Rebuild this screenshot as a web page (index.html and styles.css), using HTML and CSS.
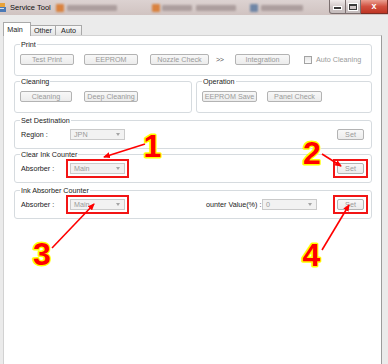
FILE: index.html
```html
<!DOCTYPE html>
<html lang="en">
<head>
<meta charset="utf-8">
<title>Service Tool</title>
<link rel="stylesheet" href="styles.css">
</head>
<body>
<div class="window">
  <header class="titlebar">
    <svg class="appicon" width="8" height="10" viewBox="0 0 8 10">
      <rect x="0" y="0" width="6" height="4" fill="#e8a23a"/>
      <rect x="0" y="4" width="7" height="5" fill="#4b79b6"/>
      <rect x="1" y="5" width="4" height="1" fill="#cfe0f2"/>
    </svg>
    <span class="title">Service Tool</span>
    <span class="blur sq orange m1"></span>
    <span class="blur txt w50 m2"></span>
    <span class="blur sq orange m3"></span>
    <span class="blur txt w30 m4"></span>
    <span class="blur txt w40 m5"></span>
    <span class="blur sq blue m6"></span>
    <span class="blur txt w42 m7"></span>
    <div class="controls">
      <span class="ctl min"><i></i></span>
      <span class="ctl max"><i></i></span>
      <span class="ctl close">x</span>
    </div>
  </header>

  <div class="frame">
    <nav class="tabs">
      <span class="tab active">Main</span>
      <span class="tab other">Other</span>
      <span class="tab auto">Auto</span>
    </nav>
    <main class="panel">
      <fieldset class="group print">
        <legend>Print</legend>
        <div class="row">
          <span class="btn w54">Test Print</span>
          <span class="btn w54 ml10">EEPROM</span>
          <span class="btn w59 ml12">Nozzle Check</span>
          <span class="next">&gt;&gt;</span>
          <span class="btn w55 ml10">Integration</span>
          <span class="check"><span class="box"></span>Auto Cleaning</span>
        </div>
      </fieldset>

      <div class="pair">
        <fieldset class="group cleaning">
          <legend>Cleaning</legend>
          <div class="row">
            <span class="btn w52">Cleaning</span>
            <span class="btn w54 ml12">Deep Cleaning</span>
          </div>
        </fieldset>
        <fieldset class="group operation">
          <legend>Operation</legend>
          <div class="row">
            <span class="btn w55">EEPROM Save</span>
            <span class="btn w55 ml10">Panel Check</span>
          </div>
        </fieldset>
      </div>

      <fieldset class="group compact dest">
        <legend>Set Destination</legend>
        <div class="row">
          <span class="lbl">Region :</span>
          <span class="select">JPN<span class="caret"></span></span>
          <span class="btn set">Set</span>
        </div>
      </fieldset>

      <fieldset class="group compact clear">
        <legend>Clear Ink Counter</legend>
        <div class="row">
          <span class="lbl">Absorber :</span>
          <span class="hlbox"><span class="select">Main<span class="caret"></span></span></span>
          <span class="hlbox push"><span class="btn w27">Set</span></span>
        </div>
      </fieldset>

      <fieldset class="group compact absorb">
        <legend>Ink Absorber Counter</legend>
        <div class="row">
          <span class="lbl">Absorber :</span>
          <span class="hlbox"><span class="select">Main<span class="caret"></span></span></span>
          <span class="vlbl">ounter Value(%) :</span>
          <span class="select">0<span class="caret"></span></span>
          <span class="hlbox push"><span class="btn w27">Set</span></span>
        </div>
      </fieldset>
    </main>
  </div>
</div>

<svg class="overlay" width="388" height="364" viewBox="0 0 388 364">
  <defs>
    <marker id="ah" markerWidth="7" markerHeight="6" refX="6" refY="3" orient="auto" markerUnits="userSpaceOnUse">
      <path d="M0,0 L7,3 L0,6 z" fill="#ff0000"/>
    </marker>
  </defs>
  <g class="arrows" stroke="#ff0000" stroke-width="1.6" marker-end="url(#ah)">
    <line x1="145" y1="144" x2="104" y2="157"/>
    <line x1="322" y1="154" x2="341" y2="166"/>
    <line x1="52" y1="248" x2="94" y2="204"/>
    <line x1="322" y1="250" x2="349" y2="205"/>
  </g>
  <g class="nums">
    <text x="152.5" y="157">1</text>
    <text x="312" y="164">2</text>
    <text x="42" y="265">3</text>
    <text x="311.5" y="266">4</text>
  </g>
</svg>
</body>
</html>
```
FILE: styles.css
```css
* { box-sizing: border-box; }
html, body { margin: 0; padding: 0; }
body {
  width: 388px;
  height: 364px;
  overflow: hidden;
  position: relative;
  background: #ebebeb;
  font-family: "Liberation Sans", Arial, sans-serif;
  font-size: 7.2px;
  color: #222;
}

/* title bar */
.titlebar {
  height: 15px;
  display: flex;
  align-items: center;
  background: linear-gradient(#dcd2d1, #d0c3c1);
  overflow: hidden;
}
.appicon { flex: none; display: block; margin-left: -1px; }
.title { margin-left: 3px; font-size: 7.5px; color: #111; white-space: nowrap; }
.blur { flex: none; filter: blur(1.3px); border-radius: 1px; }
.sq { width: 8px; height: 8px; }
.orange { background: #d9823f; }
.blue { background: #6f86a6; }
.txt { height: 6px; background: #9f9090; opacity: .75; }
.w30 { width: 30px; }
.w40 { width: 40px; }
.w42 { width: 42px; }
.w50 { width: 50px; }
.m1 { margin-left: 5px; }
.m2 { margin-left: 3px; }
.m3 { margin-left: 35px; }
.m4 { margin-left: 2px; }
.m5 { margin-left: 4px; }
.m6 { margin-left: 14px; }
.m7 { margin-left: 3px; }

.controls { margin-left: auto; align-self: flex-start; display: flex; height: 14px; flex: none; }
.ctl {
  height: 14px;
  display: flex;
  align-items: center;
  justify-content: center;
  border: 1px solid #7b6f6f;
  border-top: none;
  background: linear-gradient(#f1ecec, #cfc6c6 55%, #c4bbbb);
}
.ctl.min { width: 17px; border-radius: 0 0 0 3px; }
.ctl.max { width: 15px; border-left: none; }
.ctl.min i { display: block; width: 7px; height: 2px; background: #3a3a3a; box-shadow: 0 0 0 1px #fff; margin-top: 3px; }
.ctl.max i { display: block; width: 8px; height: 6px; border: 1px solid #3a3a3a; border-top-width: 2px; box-shadow: 0 0 0 1px #fff; }
.ctl.close {
  width: 27px;
  border-left: none;
  border-color: #7a2e25;
  background: linear-gradient(#eaa092, #d1503f 50%, #bf3524);
  color: #fff;
  font-weight: bold;
  font-size: 9px;
  line-height: 1;
}

/* frame and tabs */
.frame { padding: 7px 6px 0 3px; }
.tabs { display: flex; align-items: flex-end; height: 13px; position: relative; z-index: 1; }
.tab {
  height: 10px;
  display: flex;
  align-items: center;
  justify-content: center;
  border: 1px solid #a9a9a9;
  border-bottom: none;
  background: linear-gradient(#f8f8f8, #e4e4e4);
  color: #222;
  white-space: nowrap;
}
.tab.active { width: 28px; height: 14px; margin-bottom: -1px; background: #fff; padding-right: 4px; padding-bottom: 1px; }
.tab.other { width: 25px; border-left: none; }
.tab.auto { width: 26px; border-left: none; }

.panel {
  width: 379px;
  height: 335px;
  background: #fff;
  border: 1px solid #d2d2d2;
  border-right-color: #9c9c9c;
  padding: 4px 9px 0 10px;
  display: flex;
  flex-direction: column;
}

/* group boxes */
.group {
  margin: 0;
  min-width: 0;
  border: 1px solid #d6dbdf;
  border-radius: 3px;
  padding: 5px 7px 10px 5px;
}
.group legend {
  padding: 0 1px;
  height: 9px;
  line-height: 9px;
  color: #222;
  white-space: nowrap;
}
.group.compact { padding: 4px 7px 8px 5px; }
.pair { display: flex; gap: 4px; margin-top: 1px; }
.cleaning { width: 178px; }
.operation { width: 176px; }
.dest { margin-top: 3px; }
.clear { margin-top: 1px; }
.absorb { margin-top: 3px; }

.row { display: flex; align-items: center; height: 11px; }

.btn {
  flex: none;
  height: 11px;
  display: flex;
  align-items: center;
  justify-content: center;
  border: 1px solid #b3b3b3;
  border-radius: 2px;
  background: linear-gradient(#f8f8f8, #ececec);
  color: #9a9a9a;
  white-space: nowrap;
}
.w27 { width: 27px; }
.w52 { width: 52px; }
.w54 { width: 54px; }
.w55 { width: 55px; }
.w59 { width: 59px; }
.ml10 { margin-left: 10px; }
.ml12 { margin-left: 12px; }
.btn.set { width: 27px; margin-left: auto; }

.next { flex: none; width: 9px; margin-left: 7px; color: #555; letter-spacing: -0.5px; }
.check { display: flex; align-items: center; margin-left: 14px; color: #9a9a9a; white-space: nowrap; }
.check .box {
  width: 8px;
  height: 8px;
  margin-right: 4px;
  border: 1px solid #a3a3a3;
  background: linear-gradient(#e6e6e6, #fafafa);
}

.lbl { flex: none; width: 50px; padding-left: 1px; color: #222; white-space: nowrap; }
.vlbl { flex: none; width: 56px; margin-left: 81px; color: #222; white-space: nowrap; }
.select {
  flex: none;
  width: 55px;
  height: 11px;
  display: flex;
  align-items: center;
  padding-left: 3px;
  border: 1px solid #cacaca;
  background: #f2f2f2;
  color: #9a9a9a;
}
.caret {
  margin-left: auto;
  margin-right: 4px;
  width: 0;
  height: 0;
  border-left: 2.5px solid transparent;
  border-right: 2.5px solid transparent;
  border-top: 3px solid #a5a5a5;
}

/* red highlight frames */
.hlbox {
  flex: none;
  display: flex;
  margin: -4px;
  padding: 2px;
  border: 2px solid #f21515;
}
.hlbox.push { margin-left: auto; margin-right: -4px; }

/* annotation overlay */
.overlay { position: absolute; top: 0; left: 0; pointer-events: none; }
.nums text {
  font-family: "Liberation Sans", Arial, sans-serif;
  font-weight: bold;
  font-size: 32px;
  fill: #ff0000;
  stroke: #ffff00;
  stroke-width: 3px;
  stroke-linejoin: round;
  paint-order: stroke;
  text-anchor: middle;
}
```
